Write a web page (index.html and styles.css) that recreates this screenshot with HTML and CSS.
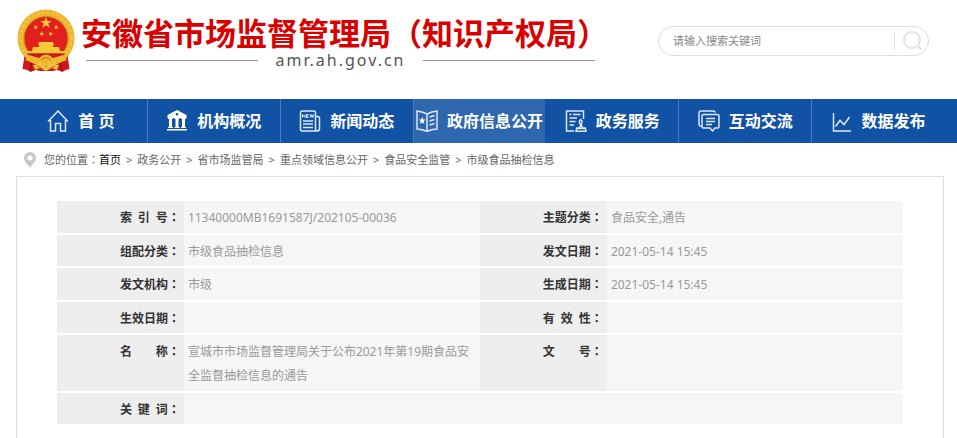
FILE: index.html
```html
<!DOCTYPE html>
<html lang="zh-CN">
<head>
<meta charset="utf-8">
<meta name="viewport" content="width=device-width, initial-scale=1">
<title>安徽省市场监督管理局（知识产权局）</title>
<link rel="stylesheet" href="styles.css">
</head>
<body>
<header class="header">
  <div class="brand">
    <svg class="emblem" viewBox="0 0 58 64" aria-hidden="true">
      <path d="M8 43L5.500 60l5 1 3 2 5-2 5 1h12l5-1 5 2 3-2 4-1-2.500-17z" fill="#d3161b"/>
      <path d="M8 48l7 5-2 9M50 48l-7 5 2 9M20 54l-3 7M38 54l3 7" fill="none" stroke="#9c0d12" stroke-width="1.500"/>
      <circle cx="29" cy="29" r="28.500" fill="#eeb52d"/>
      <circle cx="29" cy="29" r="25.500" fill="none" stroke="#f3c241" stroke-width="3" stroke-dasharray="3 2"/>
      <circle cx="29" cy="29.500" r="22" fill="#e0201d" stroke="#c98e16"/>
      <g fill="#f6c83a">
        <path id="star" d="M29 8l1.500 4h4.300l-3.500 2.600 1.400 4.200-3.700-2.600-3.700 2.600 1.400-4.200-3.500-2.600h4.300z"/>
        <use href="#star" transform="translate(6.500 12.500) scale(.42)"/>
        <use href="#star" transform="translate(27 12.500) scale(.42)"/>
        <use href="#star" transform="translate(12.500 19) scale(.42)"/>
        <use href="#star" transform="translate(21.500 19) scale(.42)"/>
        <path d="M22 33h14l1 3h-1v2h6l1 4h6v2.500H9V42h6l1-4h6v-2h-1z"/>
      </g>
      <path d="M9.500 44.500h39L43 50l-9 1-5-3-5 3-9-1z" fill="#c9191b"/>
      <path d="M22 49q7-7 14 0l10-3 4 5-9 3-7-2-5 4-5-4-7 2-9-3 4-5z" fill="#efb92f"/>
      <path d="M16 56l9-1 4 3 4-3 9 1-2 5-5-2-6 3-6-3-5 2z" fill="#f0c13b"/>
      <path d="M24 51q5-5 10 0M20 57l6 3M38 57l-6 3" fill="none" stroke="#b96d14"/>
    </svg>
    <div class="brand-text">
      <h1 class="brand-name">安徽省市场监督管理局（知识产权局）</h1>
      <div class="brand-domain">amr.ah.gov.cn</div>
    </div>
  </div>
  <form class="search" role="search">
    <input class="search-input" type="text" placeholder="请输入搜索关键词" aria-label="请输入搜索关键词">
    <button class="search-button" type="button" aria-label="搜索">
      <svg viewBox="0 0 20 20" width="20" height="20"><circle cx="9" cy="9" r="8"/><path d="M15 15l4 4"/></svg>
    </button>
  </form>
</header>

<nav class="nav">
  <a class="nav-item" href="#">
    <svg class="nav-icon" viewBox="0 0 22 22"><path d="M1 11.500L11 1l10 10.500M3.500 10v11h5v-7.500h5V21h5V10"/></svg>
    <span>首 页</span>
  </a>
  <a class="nav-item" href="#">
    <svg class="nav-icon" viewBox="0 0 22 22"><path class="solid" fill-rule="evenodd" d="M11 0l9.500 5v3h-19V5zM11 3a1.300 1.300 0 100 2.600A1.300 1.300 0 0011 3zM2 8h5v1H6v8h1v1H2v-1h1V9H2zm6.500 0h5v1h-1v8h1v1h-5v-1h1V9h-1zM15 8h5v1h-1v8h1v1h-5v-1h1V9h-1zM1 19h20v1.500H1z"/></svg>
    <span>机构概况</span>
  </a>
  <a class="nav-item" href="#">
    <svg class="nav-icon" viewBox="0 0 22 22"><path d="M16.500 19V2.500q0-1.500-1.500-1.500H3Q1.500 1 1.500 2.500v17Q1.500 21 3 21h15q2.500 0 2.500-2.500V8q0-1.500-2-1.500h-2M16.500 19q0 2 1.500 2M4 11h10M4 14h10M4 17.500h10"/><path class="fine" d="M3.500 7.500v-3L6 7.500v-3M9.500 4.500h-2v3h2M7.500 6h2M11 4.500l.8 3 1-3 1 3 .8-3"/></svg>
    <span>新闻动态</span>
  </a>
  <a class="nav-item active" href="#">
    <svg class="nav-icon" viewBox="0 0 22 22"><path d="M11 4Q6 1.500 1 1v18q6 .3 10 2.500 4-2.200 10-2.500V1q-5 .5-10 3zv17M13.500 7l5-1.500M13.500 11l5-1.500M13.500 15l5-1.500"/><path class="solid" d="M6.200 7l1 2.500h2.300l-1.800 1.700.7 2.700-2.200-1.500L4 13.900l.7-2.700-1.800-1.700h2.300z"/></svg>
    <span>政府信息公开</span>
  </a>
  <a class="nav-item plain" href="#">
    <svg class="nav-icon" viewBox="0 0 22 22"><path d="M18.500 9V1h-17v20H9M4.500 4.500h2M8 4.500h7.500M4.500 8H12M4.500 11.500h6M4.500 15H9M15.700 14.500q-2.700-2.500 0-5 2.700 2.500 0 5l-1 3.500h-3l-.7 3.300h10l-.7-3.300h-3l-1-3.500M12 18.500h8"/></svg>
    <span>政务服务</span>
  </a>
  <a class="nav-item" href="#">
    <svg class="nav-icon" viewBox="0 0 22 22"><path d="M3 16.500q-2-.5-2-2V3q0-2 2-2h12q2 0 2 1.500M5.500 4.500h14Q21 4.500 21 6v10.500q0 1.500-1.500 1.500H17l-2.500 3-2.500-3H5.500Q4 18 4 16.500V6q0-1.500 1.500-1.500zM8 8.500h9M8 11.500h9M8 14.500h6"/></svg>
    <span>互动交流</span>
  </a>
  <a class="nav-item" href="#">
    <svg class="nav-icon" viewBox="0 0 22 22"><path d="M2.500 3v18H20M4.500 16.500L9 10.500l4 4 5.500-7.500"/></svg>
    <span>数据发布</span>
  </a>
</nav>

<nav class="crumbs" aria-label="您的位置">
  <svg class="pin" viewBox="0 0 12 16" width="12" height="16"><path fill-rule="evenodd" d="M6 0a6 6 0 016 6c0 3.500-3.500 6-6 10C3.500 12 0 9.500 0 6a6 6 0 016-6zm0 3.500a2.500 2.500 0 100 5 2.500 2.500 0 000-5z"/></svg>
  <span class="crumbs-label">您的位置<span class="colon" lang="ja">：</span></span>
  <ol class="crumb-list">
    <li><a class="home" href="#">首页</a></li>
    <li><a href="#">政务公开</a></li>
    <li><a href="#">省市场监管局</a></li>
    <li><a href="#">重点领域信息公开</a></li>
    <li><a href="#">食品安全监管</a></li>
    <li><a href="#">市级食品抽检信息</a></li>
  </ol>
</nav>

<main class="panel">
  <table class="info">
    <colgroup><col class="col-label"><col class="col-value"><col class="col-label"><col class="col-value"></colgroup>
    <tr>
      <th scope="row"><span class="term">索 引 号</span><span class="colon">：</span></th><td>11340000MB1691587J/202105-00036</td>
      <th scope="row"><span class="term">主题分类</span><span class="colon">：</span></th><td>食品安全,通告</td>
    </tr>
    <tr>
      <th scope="row"><span class="term">组配分类</span><span class="colon">：</span></th><td>市级食品抽检信息</td>
      <th scope="row"><span class="term">发文日期</span><span class="colon">：</span></th><td>2021-05-14 15:45</td>
    </tr>
    <tr>
      <th scope="row"><span class="term">发文机构</span><span class="colon">：</span></th><td>市级</td>
      <th scope="row"><span class="term">生成日期</span><span class="colon">：</span></th><td>2021-05-14 15:45</td>
    </tr>
    <tr>
      <th scope="row"><span class="term">生效日期</span><span class="colon">：</span></th><td></td>
      <th scope="row"><span class="term">有 效 性</span><span class="colon">：</span></th><td></td>
    </tr>
    <tr>
      <th scope="row"><span class="term">名 称</span><span class="colon">：</span></th><td>宣城市市场监督管理局关于公布2021年第19期食品安全监督抽检信息的通告</td>
      <th scope="row"><span class="term">文 号</span><span class="colon">：</span></th><td></td>
    </tr>
    <tr>
      <th scope="row"><span class="term">关 键 词</span><span class="colon">：</span></th><td colspan="3"></td>
    </tr>
  </table>
</main>
</body>
</html>
```

FILE: styles.css
```css
* { box-sizing: border-box; }

body {
  margin: 0;
  min-height: 100vh;
  display: flex;
  flex-direction: column;
  background: #fff;
  color: #666;
  font: 12px/24px "Noto Sans", "Noto Sans CJK SC", sans-serif;
}

a { color: inherit; text-decoration: none; }

/* Full-width colon centred in its cell */
.colon { font-family: "Noto Sans CJK JP", sans-serif; line-height: 1; }

/* Header */
.header {
  display: flex;
  justify-content: space-between;
  align-items: flex-start;
  height: 99px;
  padding: 0 28px 0 17px;
}

.brand { display: flex; gap: 6px; padding-top: 9px; }
.emblem { width: 58px; height: 64px; flex: none; }

.brand-name {
  margin: 0;
  color: #d90000;
  font: 700 31px/46px "Noto Sans CJK SC", sans-serif;
  white-space: nowrap;
}

.brand-domain {
  display: flex;
  align-items: center;
  gap: 18px;
  width: 509px;
  margin-left: 5px;
  color: #555;
  font: 16px/10px "Noto Sans", sans-serif;
  letter-spacing: 2px;
}

.brand-domain::before,
.brand-domain::after {
  content: "";
  flex: 1;
  height: 1px;
  background: #999;
}

.search {
  display: flex;
  align-items: center;
  width: 271px;
  height: 30px;
  margin-top: 26px;
  padding: 0 5px 0 14px;
  border: 1px solid #ddd;
  border-radius: 15px;
}

.search-input {
  flex: 1;
  min-width: 0;
  padding: 0;
  border: 0;
  outline: 0;
  background: none;
  color: #666;
  font: 11px/24px "Noto Sans", "Noto Sans CJK SC", sans-serif;
}

.search-input::placeholder { color: #888; opacity: 1; }

.search-button {
  display: flex;
  justify-content: flex-end;
  align-items: center;
  width: 29px;
  height: 18px;
  padding: 0;
  border: 0;
  border-left: 1px solid #ddd;
  background: none;
}

.search-button svg { fill: none; stroke: #e2e2e2; stroke-width: 2; }

/* Main navigation */
.nav {
  display: flex;
  height: 44px;
  padding: 0 13px 0 14px;
  background: #1152a4;
}

.nav-item {
  flex: 1 1 0;
  display: flex;
  justify-content: center;
  align-items: center;
  gap: 9px;
  border-left: 1px solid #4c7dba;
  color: #fff;
  font-size: 16px;
  font-weight: 700;
  white-space: nowrap;
}

.nav-item:first-child,
.nav-item.plain { border-left-color: transparent; }
.nav-item.active { background: #2f67af; }

.nav-icon {
  flex: none;
  width: 22px;
  height: 22px;
  fill: none;
  stroke: #dce8f6;
  stroke-width: 1.5;
}

.nav-icon .solid { fill: #fff; stroke: none; }
.nav-icon .fine { stroke-width: 1; }

/* Breadcrumbs */
.crumbs {
  display: flex;
  align-items: center;
  height: 33px;
  padding: 0 24px;
  font-size: 11px;
}

.pin { margin-right: 8px; fill: #c8c8c8; }

.crumb-list {
  display: flex;
  margin: 0;
  padding: 0;
  list-style: none;
}

.crumb-list li + li::before { content: ">"; margin: 0 5px; }
.home { color: #111; }

/* Document details */
.panel {
  flex: 1;
  margin: 0 13px 0 16px;
  padding: 24px 40px 0;
  border: 1px solid #ddd;
  border-bottom: 0;
}

.info {
  width: 100%;
  table-layout: fixed;
  border-collapse: separate;
  border-spacing: 0;
}

.col-label { width: 15%; }
.col-value { width: 35%; }

.info th,
.info td {
  padding: 5px 4px 3px;
  border-bottom: 2px solid #fff;
  vertical-align: top;
}

.info tr:nth-child(even) > * { padding-bottom: 2px; }

.info th {
  background: #eee;
  color: #333;
  text-align: right;
  white-space: nowrap;
}

.info td { background: #f6f6f6; color: #999; }

.term {
  display: inline-block;
  width: 48px;
  text-align: justify;
  text-align-last: justify;
}
```
